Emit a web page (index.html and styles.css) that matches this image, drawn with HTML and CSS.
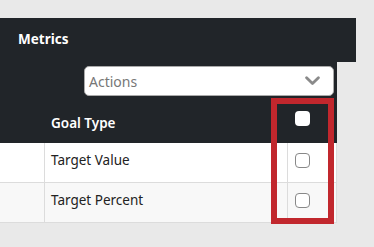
FILE: index.html
```html
<!DOCTYPE html>
<html>
<head>
<meta charset="utf-8">
<link rel="stylesheet" href="styles.css">
</head>
<body>
<div class="panel">
  <div class="panel-head">Metrics</div>
  <div class="panel-body">
    <div class="toolbar">
      <div class="select">
        <span class="select-text">Actions</span>
        <svg class="chev" width="15" height="10" viewBox="0 0 15 10"><path d="M1.6 1.8 L7.5 7.6 L13.4 1.8" fill="none" stroke="#8a8a8a" stroke-width="2.8" stroke-linecap="round" stroke-linejoin="round"/></svg>
      </div>
    </div>
    <div class="table">
      <div class="row head">
        <div class="cell c1"></div>
        <div class="cell c2">Goal Type</div>
        <div class="cell c3"><span class="cb cb-head"></span></div>
      </div>
      <div class="row">
        <div class="cell c1"></div>
        <div class="cell c2">Target Value</div>
        <div class="cell c3"><span class="cb"></span></div>
      </div>
      <div class="row alt">
        <div class="cell c1"></div>
        <div class="cell c2">Target Percent</div>
        <div class="cell c3"><span class="cb"></span></div>
      </div>
    </div>
  </div>
</div>
<div class="highlight"></div>
</body>
</html>
```
FILE: styles.css
```css
html, body {
  margin: 0;
  padding: 0;
}
body {
  background: #e9e9e9;
  font-family: "Noto Sans", "Open Sans", sans-serif;
  padding-top: 18px;
  position: relative;
  height: 247px;
  box-sizing: border-box;
  overflow: hidden;
}
.panel {
  width: 356px;
}
.panel-head {
  height: 44px;
  background: #212529;
  color: #fff;
  font-weight: 700;
  font-size: 13.5px;
  display: flex;
  align-items: center;
  padding-left: 18px;
  box-sizing: border-box;
  padding-bottom: 2px;
}
.panel-body {
  width: 337px;
}
.toolbar {
  background: #212529;
  padding: 4px 3px 2px 84px;
  height: 36px;
  box-sizing: border-box;
}
.select {
  height: 30px;
  background: #fff;
  border: 1px solid #aaa;
  border-radius: 5px;
  box-sizing: border-box;
  display: flex;
  align-items: center;
  justify-content: space-between;
  padding: 0 13px 0 4px;
}
.select-text {
  color: #777;
  font-size: 14px;
}
.chev {
  display: block;
}
.table {
  display: flex;
  flex-direction: column;
}
.row {
  display: grid;
  grid-template-columns: 45px 243px 49px;
  height: 40px;
  background: #fff;
  border-bottom: 1px solid #dcdcdc;
  box-sizing: border-box;
}
.row.alt {
  background: #f8f8f8;
}
.row.head {
  height: 45px;
  background: #212529;
  border-bottom: none;
  color: #fff;
  font-weight: 600;
}
.cell {
  display: flex;
  align-items: center;
  font-size: 13.5px;
  color: #222;
  box-sizing: border-box;
}
.row:not(.head) .cell.c1,
.row:not(.head) .cell.c2,
.row:not(.head) .cell.c3 {
  border-right: 1px solid #dcdcdc;
}
.row.head .cell {
  color: #fff;
  padding-top: 4px;
}
.c2 {
  padding-left: 6px;
}
.row:not(.head) .c2 {
  padding-bottom: 6px;
}
.c3 {
  padding-left: 7px;
}
.row:not(.head) .c3 {
  padding-bottom: 4px;
}
.cb {
  width: 15px;
  height: 15px;
  border: 1px solid #888;
  border-radius: 4px;
  background: #fff;
  box-sizing: border-box;
  display: block;
}
.cb-head {
  border: none;
  margin-bottom: 8px;
}
.highlight {
  position: absolute;
  left: 271px;
  top: 98px;
  width: 63px;
  height: 126px;
  border: 6px solid #c1272d;
  box-sizing: border-box;
}
```
